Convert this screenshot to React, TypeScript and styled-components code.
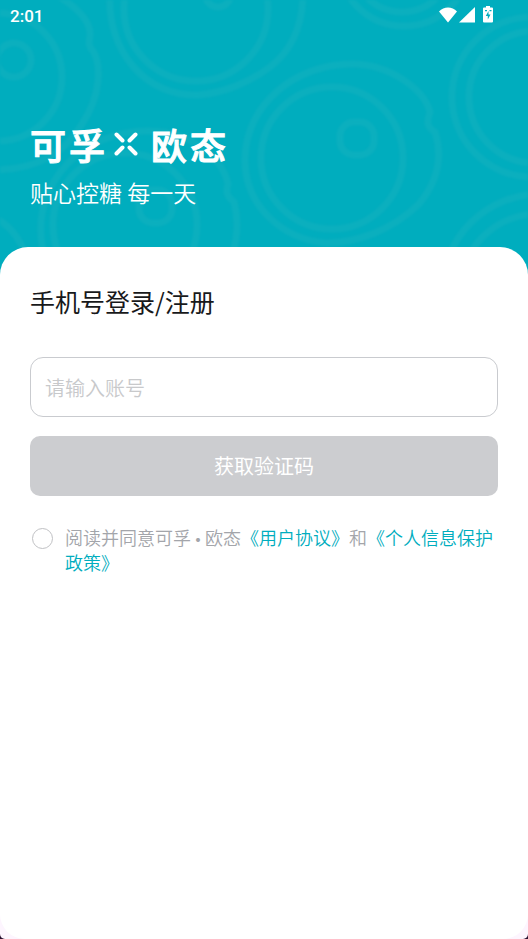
import React from 'react';
import styled, { createGlobalStyle } from 'styled-components';

const TEAL = '#00adbe';

const GlobalStyle = createGlobalStyle`
  *, *::before, *::after { box-sizing: border-box; }
  body {
    margin: 0;
    background: #2a1030;
    font-family: Roboto, "Noto Sans CJK SC", sans-serif;
  }
  button, input { font: inherit; }
`;

const Screen = styled.div`
  display: flex;
  flex-direction: column;
  min-height: 100vh;
  overflow: hidden;
  background: #fdf5fe;
  border-radius: 0 0 5px 5px;
`;

const Header = styled.header`
  position: relative;
  height: 275px;
  background: ${TEAL};
  color: #fff;
  flex: none;
`;

const Pattern = styled.svg`
  position: absolute;
  inset: 0;
  width: 100%;
  height: 100%;
  filter: blur(1px);
`;

const HeaderContent = styled.div`
  position: relative;
`;

const StatusBar = styled.div`
  display: flex;
  align-items: center;
  justify-content: space-between;
  height: 32px;
  padding: 0 34px 0 10px;
`;

const Clock = styled.time`
  font: 500 17px/20px Roboto, sans-serif;
`;

const StatusIcons = styled.svg`
  display: block;
  width: 56px;
  height: 20px;
`;

const Brand = styled.div`
  padding: 92px 30px 0;
`;

const Logo = styled.h1`
  display: flex;
  align-items: center;
  gap: 3px;
  margin: 0;
  font: 500 36px/40px "Noto Sans CJK SC", sans-serif;
  -webkit-text-stroke: 1px #fff;
  stroke-linejoin: round;
`;

const Cross = styled.svg`
  width: 24px;
  height: 24px;
  margin: 0 10px 0 6px;
`;

const Slogan = styled.p`
  margin: 12px 0 0;
  font: 350 23px/32px "Noto Sans CJK SC", sans-serif;
`;

const Card = styled.main`
  position: relative;
  flex: 1;
  margin-top: -28px;
  padding: 35px 30px;
  border-radius: 28px 28px 25px 25px;
  background: #fff;
`;

const Title = styled.h2`
  margin: 0 0 37px;
  color: #18191b;
  font: 400 25px/38px "Noto Sans CJK SC", sans-serif;
`;

const Form = styled.form`
  display: flex;
  flex-direction: column;
`;

const AccountInput = styled.input`
  width: 100%;
  height: 60px;
  padding: 0 14px;
  border: 1px solid #c9cbcf;
  border-radius: 13px;
  outline: 0;
  background: #fff;
  color: #18191b;
  font: 350 20px/30px "Noto Sans CJK SC", sans-serif;

  &::placeholder { color: #c8c9cb; opacity: 1; }
  &:focus { border-color: ${TEAL}; }
`;

const SubmitButton = styled.button`
  height: 60px;
  margin-top: 19px;
  border: 0;
  border-radius: 10px;
  background: #cccdd0;
  color: #fff;
  font: 400 20px/30px "Noto Sans CJK SC", sans-serif;
`;

const Agreement = styled.div`
  display: flex;
  align-items: flex-start;
  gap: 13px;
  margin-top: 29px;
  padding-left: 2px;
`;

const RoundCheck = styled.input`
  appearance: none;
  flex: none;
  width: 21px;
  height: 21px;
  margin: 3px 0 0;
  border: 1px solid #c0c1c4;
  border-radius: 50%;

  &:checked { border: 6px solid ${TEAL}; }
`;

const Terms = styled.label`
  margin-left: -1px;
  color: #a3a5aa;
  font: 350 18px/25px "Noto Sans CJK SC", sans-serif;
`;

const Dot = styled.span`
  font-size: 14px;
  font-weight: 900;
  line-height: 1;
`;

const TermsLink = styled.a`
  color: ${TEAL};
  text-decoration: none;
`;

function RingPattern() {
  return (
    <Pattern viewBox="0 0 528 275" preserveAspectRatio="xMidYMin slice" aria-hidden="true">
      <g fill="none" stroke="#ffe9d8" strokeOpacity="0.045" strokeWidth="7">
        <circle cx="14" cy="60" r="17" />
        <circle cx="-2" cy="77" r="64" />
        <path d="M50-8C74 4 91 20 90 35C89 43 88 46 93 51C101 64 102 94 82 124C63 157 30 170-8 170" />

        <circle cx="218" cy="-6" r="13" />
        <circle cx="196" cy="9" r="72" />
        <path d="M110-8C106 51 146 97 198 95C224 93 250 82 270 67C291 51 303 28 303-8" />

        <circle cx="404" cy="-40" r="66" />
        <circle cx="402" cy="-38" r="50" />

        <circle cx="532" cy="97" r="80" />
        <circle cx="535" cy="97" r="66" />

        <rect x="340" y="122" width="34" height="33" rx="14" />
        <circle cx="332" cy="158" r="71" />
        <path d="M352 64C389 64 424 89 430 112C427 121 426 127 435 132C443 157 438 181 419 204C391 231 356 243 326 243C281 239 245 205 245 160C245 104 296 64 352 64Z" />

        <rect x="139" y="190" width="33" height="33" rx="14" />
        <circle cx="125" cy="225" r="72" />
        <path d="M151 131C191 132 222 157 228 184C226 191 226 196 234 202C244 240 226 278 210 290M151 131C82 129 32 184 42 245C46 265 56 280 64 288" />

        <circle cx="540" cy="292" r="98" />
        <circle cx="538" cy="292" r="78" />
        <path d="M-8 217Q14 225 26 255" />
      </g>
    </Pattern>
  );
}

export default function App() {
  return (
    <>
      <GlobalStyle />
      <Screen>
        <Header>
          <RingPattern />
          <HeaderContent>
            <StatusBar>
              <Clock>2:01</Clock>
              <StatusIcons viewBox="0 0 56 20" fill="#fff" aria-hidden="true">
                <path d="M1 5.500C6 0 14 0 19 5.500L10 16.500Z" />
                <path d="M21 16.500L37 1V16.500Z" />
                <path d="M48 0h4v1.500h2q1 0 1 1v13q0 1-1 1h-8q-1 0-1-1v-13q0-1 1-1h2Z" />
                <path d="M47 4h2v1.300h-2ZM51.500 4h2v1.300h-2ZM50.500 5v3.500h2L49.800 13.500V10H47.800Z" fill={TEAL} />
              </StatusIcons>
            </StatusBar>
            <Brand>
              <Logo>
                <span>可</span>
                <span>孚</span>
                <Cross viewBox="0 0 24 24" role="img" aria-label="×">
                  <path
                    d="M2.500 2.500L8.500 8.500M21.500 2.500L15.500 8.500M2.500 21.500L8.500 15.500M21.500 21.500L15.500 15.500"
                    stroke="#fff"
                    strokeWidth="4"
                    strokeLinecap="round"
                  />
                </Cross>
                <span>欧</span>
                <span>态</span>
              </Logo>
              <Slogan>贴心控糖 每一天</Slogan>
            </Brand>
          </HeaderContent>
        </Header>
        <Card>
          <Title>手机号登录/注册</Title>
          <Form onSubmit={(event) => event.preventDefault()}>
            <AccountInput type="tel" aria-label="账号" placeholder="请输入账号" />
            <SubmitButton type="submit">获取验证码</SubmitButton>
            <Agreement>
              <RoundCheck id="agree" type="checkbox" />
              <Terms htmlFor="agree">
                阅读并同意可孚<Dot>・</Dot>欧态<TermsLink href="#user-agreement">《用户协议》</TermsLink>和<TermsLink href="#privacy-policy">《个人信息保护政策》</TermsLink>
              </Terms>
            </Agreement>
          </Form>
        </Card>
      </Screen>
    </>
  );
}
